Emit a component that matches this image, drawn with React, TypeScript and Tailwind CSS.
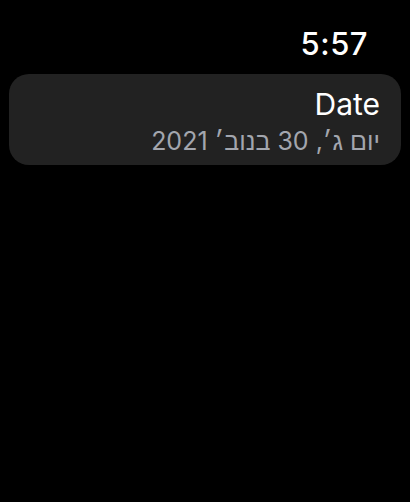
import React from 'react';

const App: React.FC = () => {
  return (
    <div className="w-[410px] h-[502px] bg-black overflow-hidden font-['Inter','Liberation_Sans',sans-serif]">
      <div className="flex justify-end pr-[42px] pt-[24px] h-[74px]">
        <span className="text-white text-[31px] font-medium leading-[40px] tracking-[0.5px]">5:57</span>
      </div>
      <div className="mx-[9px] rounded-[20px] bg-[#222222] h-[91px] pr-[21px] pt-[12px] flex flex-col items-end">
        <span className="text-white text-[30px] leading-[36px]">Date</span>
        <span dir="rtl" className="mt-[3px] text-[#a3a6ae] text-[25px] leading-[32px]">יום ג׳, 30 בנוב׳ 2021</span>
      </div>
    </div>
  );
};

export default App;
